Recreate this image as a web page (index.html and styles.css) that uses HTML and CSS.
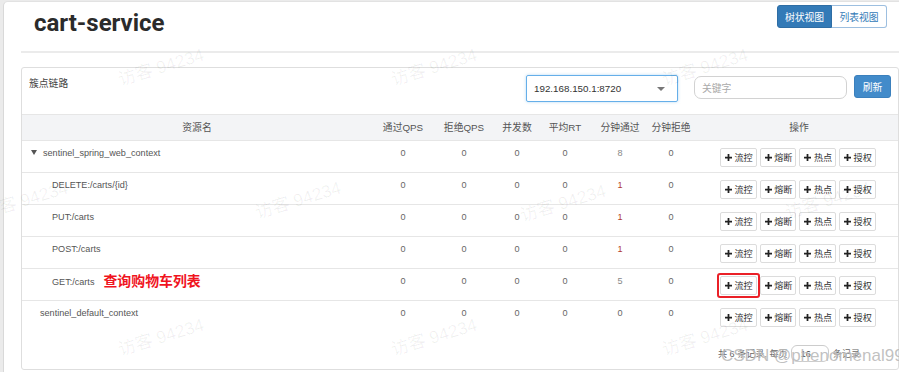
FILE: index.html
```html
<!DOCTYPE html>
<html lang="zh-CN">
<head>
<meta charset="utf-8">
<title>cart-service</title>
<link rel="stylesheet" href="styles.css">
</head>
<body>
<div class="page">
  <div class="page-head">
    <h1 class="title">cart-service</h1>
    <div class="view-toggle">
      <span class="vt-btn active">树状视图</span>
      <span class="vt-btn">列表视图</span>
    </div>
  </div>
  <div class="divider"></div>
  <div class="card">
    <div class="card-head">
      <span class="card-title">簇点链路</span>
      <div class="select"><span>192.168.150.1:8720</span><i class="caret"></i></div>
      <div class="search">关键字</div>
      <span class="btn-refresh">刷新</span>
    </div>
    <div class="grid">
      <div class="row head">
        <div>资源名</div><div>通过QPS</div><div>拒绝QPS</div><div>并发数</div><div>平均RT</div><div>分钟通过</div><div>分钟拒绝</div><div class="ops-h">操作</div>
      </div>
      <div class="row">
        <div class="name lvl0"><i class="tri"></i>sentinel_spring_web_context</div>
        <div>0</div><div>0</div><div>0</div><div>0</div><div class="lite">8</div><div>0</div>
        <div class="ops"><span class="op"><svg class="plus" viewBox="0 0 8 8"><path d="M3 0h2v3h3v2H5v3H3V5H0V3h3z"/></svg>流控</span><span class="op"><svg class="plus" viewBox="0 0 8 8"><path d="M3 0h2v3h3v2H5v3H3V5H0V3h3z"/></svg>熔断</span><span class="op"><svg class="plus" viewBox="0 0 8 8"><path d="M3 0h2v3h3v2H5v3H3V5H0V3h3z"/></svg>热点</span><span class="op"><svg class="plus" viewBox="0 0 8 8"><path d="M3 0h2v3h3v2H5v3H3V5H0V3h3z"/></svg>授权</span></div>
      </div>
      <div class="row">
        <div class="name lvl1">DELETE:/carts/{id}</div>
        <div>0</div><div>0</div><div>0</div><div>0</div><div class="red">1</div><div>0</div>
        <div class="ops"><span class="op"><svg class="plus" viewBox="0 0 8 8"><path d="M3 0h2v3h3v2H5v3H3V5H0V3h3z"/></svg>流控</span><span class="op"><svg class="plus" viewBox="0 0 8 8"><path d="M3 0h2v3h3v2H5v3H3V5H0V3h3z"/></svg>熔断</span><span class="op"><svg class="plus" viewBox="0 0 8 8"><path d="M3 0h2v3h3v2H5v3H3V5H0V3h3z"/></svg>热点</span><span class="op"><svg class="plus" viewBox="0 0 8 8"><path d="M3 0h2v3h3v2H5v3H3V5H0V3h3z"/></svg>授权</span></div>
      </div>
      <div class="row">
        <div class="name lvl1">PUT:/carts</div>
        <div>0</div><div>0</div><div>0</div><div>0</div><div class="red">1</div><div>0</div>
        <div class="ops"><span class="op"><svg class="plus" viewBox="0 0 8 8"><path d="M3 0h2v3h3v2H5v3H3V5H0V3h3z"/></svg>流控</span><span class="op"><svg class="plus" viewBox="0 0 8 8"><path d="M3 0h2v3h3v2H5v3H3V5H0V3h3z"/></svg>熔断</span><span class="op"><svg class="plus" viewBox="0 0 8 8"><path d="M3 0h2v3h3v2H5v3H3V5H0V3h3z"/></svg>热点</span><span class="op"><svg class="plus" viewBox="0 0 8 8"><path d="M3 0h2v3h3v2H5v3H3V5H0V3h3z"/></svg>授权</span></div>
      </div>
      <div class="row">
        <div class="name lvl1">POST:/carts</div>
        <div>0</div><div>0</div><div>0</div><div>0</div><div class="red">1</div><div>0</div>
        <div class="ops"><span class="op"><svg class="plus" viewBox="0 0 8 8"><path d="M3 0h2v3h3v2H5v3H3V5H0V3h3z"/></svg>流控</span><span class="op"><svg class="plus" viewBox="0 0 8 8"><path d="M3 0h2v3h3v2H5v3H3V5H0V3h3z"/></svg>熔断</span><span class="op"><svg class="plus" viewBox="0 0 8 8"><path d="M3 0h2v3h3v2H5v3H3V5H0V3h3z"/></svg>热点</span><span class="op"><svg class="plus" viewBox="0 0 8 8"><path d="M3 0h2v3h3v2H5v3H3V5H0V3h3z"/></svg>授权</span></div>
      </div>
      <div class="row">
        <div class="name lvl1">GET:/carts<span class="note">查询购物车列表</span></div>
        <div>0</div><div>0</div><div>0</div><div>0</div><div class="lite">5</div><div>0</div>
        <div class="ops"><span class="op marked"><svg class="plus" viewBox="0 0 8 8"><path d="M3 0h2v3h3v2H5v3H3V5H0V3h3z"/></svg>流控</span><span class="op"><svg class="plus" viewBox="0 0 8 8"><path d="M3 0h2v3h3v2H5v3H3V5H0V3h3z"/></svg>熔断</span><span class="op"><svg class="plus" viewBox="0 0 8 8"><path d="M3 0h2v3h3v2H5v3H3V5H0V3h3z"/></svg>热点</span><span class="op"><svg class="plus" viewBox="0 0 8 8"><path d="M3 0h2v3h3v2H5v3H3V5H0V3h3z"/></svg>授权</span></div>
      </div>
      <div class="row">
        <div class="name lvl0b">sentinel_default_context</div>
        <div>0</div><div>0</div><div>0</div><div>0</div><div>0</div><div>0</div>
        <div class="ops"><span class="op"><svg class="plus" viewBox="0 0 8 8"><path d="M3 0h2v3h3v2H5v3H3V5H0V3h3z"/></svg>流控</span><span class="op"><svg class="plus" viewBox="0 0 8 8"><path d="M3 0h2v3h3v2H5v3H3V5H0V3h3z"/></svg>熔断</span><span class="op"><svg class="plus" viewBox="0 0 8 8"><path d="M3 0h2v3h3v2H5v3H3V5H0V3h3z"/></svg>热点</span><span class="op"><svg class="plus" viewBox="0 0 8 8"><path d="M3 0h2v3h3v2H5v3H3V5H0V3h3z"/></svg>授权</span></div>
      </div>
    </div>
    <div class="pager">
      <span>共 6 条记录, 每页</span><span class="page-size">16</span><span>条记录</span>
    </div>
  </div>
</div>
<div class="wm-layer">
  <span class="wm w1">访客 94234</span>
  <span class="wm w2">访客 94234</span>
  <span class="wm w3">访客 94234</span>
  <span class="wm w4">访客 94234</span>
  <span class="wm w5">访客 94234</span>
  <span class="wm w6">访客 94234</span>
  <span class="wm w7">访客 94234</span>
  <span class="wm w8">访客 94234</span>
  <span class="wm w9">访客 94234</span>
  <span class="wm w10">访客 94234</span>
</div>
<div class="csdn">CSDN @phenomenal99</div>
</body>
</html>
```

FILE: styles.css
```css
html, body {
  margin: 0;
  padding: 0;
}
body {
  position: relative;
  width: 899px;
  height: 372px;
  overflow: hidden;
  background: #ebebeb;
  font-family: "Liberation Sans", "Noto Sans CJK SC", sans-serif;
  color: #555;
}
.page {
  margin: 1px 0 0 3px;
  height: 371px;
  box-sizing: border-box;
  background: #fff;
  border-left: 1px solid #d9d9d9;
  border-top: 1px solid #e2e2e2;
  border-radius: 5px 0 0 0;
  padding: 0 0 0 17px;
}
.page-head {
  height: 49px;
  display: flex;
  justify-content: space-between;
  align-items: flex-start;
  padding-right: 12px;
}
.title {
  margin: 8px 0 0 13px;
  font-family: Roboto, "Liberation Sans", sans-serif;
  font-weight: bold;
  font-size: 24px;
  line-height: 27px;
  color: #2b2b2b;
}
.view-toggle {
  margin-top: 3px;
  display: flex;
}
.vt-btn {
  width: 55px;
  height: 23px;
  box-sizing: border-box;
  display: flex;
  align-items: center;
  justify-content: center;
  font-size: 9.8px;
  border: 1px solid #9dbfe0;
  color: #337ab7;
  background: #fff;
}
.vt-btn.active {
  background: #337ab7;
  border-color: #2e6da4;
  color: #fff;
  border-radius: 3px 0 0 3px;
}
.vt-btn:last-child {
  border-radius: 0 3px 3px 0;
  border-left: none;
}
.divider {
  height: 2px;
  background: #ebebeb;
}
.card {
  margin-top: 14px;
  border: 1px solid #dedede;
  border-radius: 3px;
  height: 303px;
  box-sizing: border-box;
}
.card-head {
  height: 46px;
  display: flex;
  align-items: flex-start;
  padding: 0 7px;
}
.card-title {
  flex: 1;
  margin-top: 9px;
  font-size: 9.8px;
  line-height: 14px;
  color: #444;
}
.select {
  margin-top: 7px;
  width: 152px;
  height: 27px;
  box-sizing: border-box;
  border: 1px solid #66afe9;
  border-radius: 2px;
  box-shadow: 0 0 3px rgba(102, 175, 233, 0.5);
  display: flex;
  align-items: center;
  justify-content: space-between;
  padding: 0 12px 0 7px;
  font-size: 9.8px;
  color: #333;
}
.caret {
  width: 0;
  height: 0;
  border-left: 4px solid transparent;
  border-right: 4px solid transparent;
  border-top: 4px solid #777;
}
.search {
  margin: 8px 0 0 16px;
  width: 153px;
  height: 23px;
  box-sizing: border-box;
  border: 1px solid #d2d2d2;
  border-radius: 7px;
  padding-left: 7px;
  display: flex;
  align-items: center;
  font-size: 9.8px;
  color: #aaa;
}
.btn-refresh {
  margin: 7px 0 0 7px;
  width: 37px;
  height: 23px;
  box-sizing: border-box;
  background: #428bca;
  border: 1px solid #3b80bd;
  border-radius: 3px;
  color: #fff;
  font-size: 9.8px;
  display: flex;
  align-items: center;
  justify-content: center;
}
.row {
  display: grid;
  grid-template-columns: 350px 62px 60px 46px 50px 60px 42px 1fr;
  height: 32px;
  box-sizing: border-box;
  border-top: 1px solid #e6e6e6;
  font-size: 9.1px;
  line-height: 12px;
  color: #666;
}
.row > div {
  text-align: center;
  padding-top: 6px;
}
.row.head {
  height: 26px;
  background: #f3f4f6;
  font-size: 9.8px;
  color: #555;
}
.row.head > div {
  padding-top: 0;
  align-self: center;
}
.row.head > .ops-h {
  padding-left: 8px;
}
.row > .name {
  text-align: left;
  color: #555;
}
.name.lvl0 {
  padding-left: 9px;
}
.name.lvl1 {
  padding-left: 30px;
}
.name.lvl0b {
  padding-left: 18px;
}
.tri {
  display: inline-block;
  width: 0;
  height: 0;
  border-left: 3px solid transparent;
  border-right: 3px solid transparent;
  border-top: 5px solid #555;
  margin-right: 6px;
  vertical-align: 1px;
}
.note {
  margin-left: 9px;
  font-size: 13.9px;
  font-weight: bold;
  color: #f0141e;
  line-height: 12px;
  vertical-align: -1px;
  text-shadow: 0 0 2px #fff, 0 0 1px #fff;
}
.row > .lite {
  color: #888;
}
.row > .red {
  color: #b23c30;
}
.row > .ops {
  padding: 7px 0 0 28px;
  display: flex;
  gap: 3px;
  align-items: flex-start;
}
.op {
  position: relative;
  height: 19px;
  box-sizing: border-box;
  border: 1px solid #dcdcdc;
  border-radius: 2px;
  background: #fff;
  padding: 0 3px 0 4px;
  display: flex;
  align-items: center;
  gap: 2.5px;
  font-size: 9.1px;
  color: #333;
}
.plus {
  width: 7px;
  height: 7px;
  fill: #222;
}
.op.marked::after {
  content: "";
  position: absolute;
  left: -4px;
  top: -4px;
  right: -4px;
  bottom: -4px;
  border: 2px solid #ea2027;
  border-radius: 3px;
}
.pager {
  display: flex;
  justify-content: flex-end;
  align-items: center;
  padding: 13px 38px 0 0;
  font-size: 9.1px;
  line-height: 12px;
  color: #666;
}
.page-size {
  width: 38px;
  height: 17px;
  box-sizing: border-box;
  border: 1px solid #ccc;
  border-radius: 6px;
  margin: 0 4px 0 3px;
  display: flex;
  align-items: center;
  padding-left: 9px;
  line-height: 12px;
  color: #444;
}
.wm-layer {
  position: absolute;
  left: 0;
  top: 0;
  width: 899px;
  height: 372px;
  pointer-events: none;
}
.wm {
  position: absolute;
  width: 92px;
  text-align: center;
  font-size: 17.5px;
  line-height: 20px;
  color: rgba(0, 0, 0, 0.06);
  transform: rotate(-17deg);
  white-space: nowrap;
}
.w1 { left: 115px; top: 57px; }
.w2 { left: 388px; top: 57px; }
.w3 { left: 659px; top: 57px; }
.w4 { left: -21px; top: 190px; }
.w5 { left: 252px; top: 190px; }
.w6 { left: 517px; top: 193px; }
.w7 { left: 782px; top: 190px; }
.w8 { left: 115px; top: 327px; }
.w9 { left: 388px; top: 327px; }
.w10 { left: 659px; top: 327px; }
.csdn {
  position: absolute;
  left: 721px;
  top: 346px;
  font-size: 17px;
  line-height: 20px;
  color: rgba(140, 140, 140, 0.55);
  text-shadow: 0 0 1px rgba(255, 255, 255, 0.8);
  white-space: nowrap;
}
```
